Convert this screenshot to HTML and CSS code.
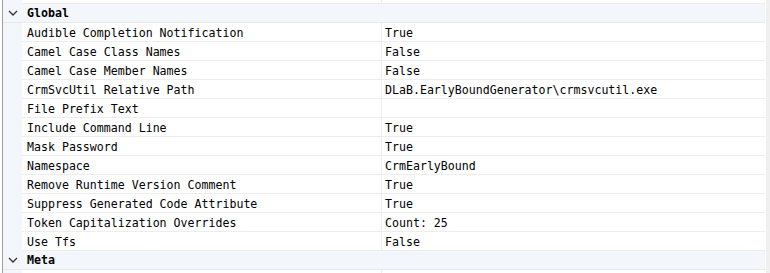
FILE: index.html
```html
<!DOCTYPE html>
<html>
<head>
<meta charset="utf-8">
<link rel="stylesheet" href="styles.css">
</head>
<body>
<div class="grid">
  <div class="list">
    <div class="row partial"><div class="name"></div><div class="value"></div></div>
    <div class="cat">
      <svg class="chev" width="10" height="6" viewBox="0 0 10 6"><path d="M1 1 L5 5 L9 1" fill="none" stroke="#333" stroke-width="1.3"/></svg>
      <span>Global</span>
    </div>
    <div class="row"><div class="name">Audible Completion Notification</div><div class="value">True</div></div>
    <div class="row"><div class="name">Camel Case Class Names</div><div class="value">False</div></div>
    <div class="row"><div class="name">Camel Case Member Names</div><div class="value">False</div></div>
    <div class="row"><div class="name">CrmSvcUtil Relative Path</div><div class="value">DLaB.EarlyBoundGenerator\crmsvcutil.exe</div></div>
    <div class="row"><div class="name">File Prefix Text</div><div class="value"></div></div>
    <div class="row"><div class="name">Include Command Line</div><div class="value">True</div></div>
    <div class="row"><div class="name">Mask Password</div><div class="value">True</div></div>
    <div class="row"><div class="name">Namespace</div><div class="value">CrmEarlyBound</div></div>
    <div class="row"><div class="name">Remove Runtime Version Comment</div><div class="value">True</div></div>
    <div class="row"><div class="name">Suppress Generated Code Attribute</div><div class="value">True</div></div>
    <div class="row"><div class="name">Token Capitalization Overrides</div><div class="value">Count: 25</div></div>
    <div class="row"><div class="name">Use Tfs</div><div class="value">False</div></div>
    <div class="cat">
      <svg class="chev" width="10" height="6" viewBox="0 0 10 6"><path d="M1 1 L5 5 L9 1" fill="none" stroke="#333" stroke-width="1.3"/></svg>
      <span>Meta</span>
    </div>
    <div class="row"><div class="name"></div><div class="value"></div></div>
  </div>
  <div class="scroll"></div>
</div>
</body>
</html>
```
FILE: styles.css
```css
html, body {
  margin: 0;
  padding: 0;
  background: #ffffff;
}
body {
  width: 770px;
  height: 273px;
  overflow: hidden;
  font-family: "DejaVu Sans Mono", "Liberation Mono", monospace;
  font-size: 11.6px;
  color: #000;
}
.grid {
  display: flex;
  height: 273px;
}
.list {
  flex: 1;
  display: flex;
  flex-direction: column;
  margin-left: 2px;
  border-left: 1px solid #a0a0a0;
  overflow: hidden;
}
.scroll {
  width: 4px;
  margin-left: 1px;
  background: #f0f0f0;
}
.row {
  display: flex;
  height: 19px;
  flex: none;
  box-sizing: border-box;
  background: #f3f6fb;
  padding-left: 19px;
}
.row.partial {
  height: 4px;
}
.name, .value {
  background: #fff;
  border-bottom: 1px solid #ededed;
  box-sizing: border-box;
  line-height: 18px;
  padding-top: 1px;
  white-space: nowrap;
  overflow: hidden;
}
.row.partial .name, .row.partial .value {
  padding-top: 0;
}
.name {
  width: 360px;
  padding-left: 5px;
  border-right: 1px solid #ededed;
}
.value {
  flex: 1;
  padding-left: 3px;
}
.cat {
  display: flex;
  align-items: center;
  height: 19px;
  flex: none;
  box-sizing: border-box;
  background: #f3f6fb;
  border-bottom: 1px solid #e8e8e8;
  font-weight: bold;
}
.chev {
  margin-left: 5px;
  margin-right: 9px;
}
```
